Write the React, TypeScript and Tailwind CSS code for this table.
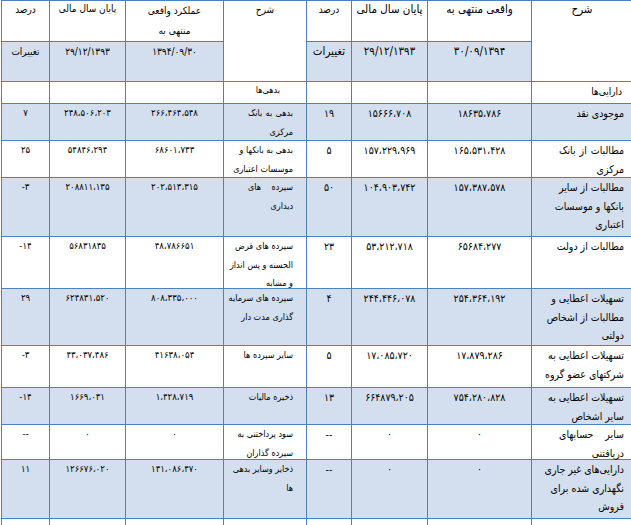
import React from "react";

type Cells = [string, string, string, string];

type Row = {
  h: number;
  band: boolean;
  right: Cells;
  left: Cells;
};

// first cell of each half: description lines split by "|"
const rows: Row[] = [
  {
    h: 37,
    band: true,
    right: ["موجودی نقد", "۱۸۶۳۵،۷۸۶", "۱۵۶۶۶،۷۰۸", "۱۹"],
    left: ["بدهی به بانک|مرکزی", "۲۶۶،۴۶۴،۵۴۸", "۲۴۸،۵۰۶،۲۰۳", "۷"],
  },
  {
    h: 37,
    band: false,
    right: ["مطالبات از بانک|مرکزی", "۱۶۵،۵۳۱،۴۲۸", "۱۵۷،۲۲۹،۹۶۹", "۵"],
    left: ["بدهی به بانکها و|موسسات اعتباری", "۶۸۶۰۱،۷۳۳", "۵۴۸۴۶،۲۹۴", "۲۵"],
  },
  {
    h: 59,
    band: true,
    right: ["مطالبات از سایر|بانکها و موسسات|اعتباری", "۱۵۷،۳۸۷،۵۷۸", "۱۰۴،۹۰۳،۷۴۲", "۵۰"],
    left: ["سپرده های|دیداری", "۲۰۲،۵۱۳،۳۱۵", "۲۰۸۸۱۱،۱۳۵", "-۳"],
  },
  {
    h: 52,
    band: false,
    right: ["مطالبات از دولت", "۶۵۶۸۴،۲۷۷", "۵۳،۲۱۲،۷۱۸", "۲۳"],
    left: ["سپرده های قرض|الحسنه و پس انداز|و مشابه", "۴۸،۷۸۶۶۵۱", "۵۶۸۳۱۸۳۵", "-۱۴"],
  },
  {
    h: 57,
    band: true,
    right: ["تسهیلات اعطایی و|مطالبات از اشخاص|دولتی", "۲۵۴،۳۶۴،۱۹۲", "۲۴۴،۴۴۶،۰۷۸", "۴"],
    left: ["سپرده های سرمایه|گذاری مدت دار", "۸۰۸،۳۳۵،۰۰۰", "۶۲۴۸۳۱،۵۲۰", "۲۹"],
  },
  {
    h: 42,
    band: false,
    right: ["تسهیلات اعطایی به|شرکتهای عضو گروه", "۱۷،۸۷۹،۲۸۶", "۱۷،۰۸۵،۷۲۰", "۵"],
    left: ["سایر سپرده ها", "۴۱۶۳۸،۰۵۴", "۴۳،۰۳۷،۴۸۶", "-۳"],
  },
  {
    h: 37,
    band: true,
    right: ["تسهیلات اعطایی به|سایر اشخاص", "۷۵۴،۲۸۰،۸۲۸", "۶۶۴۸۷۹،۲۰۵", "۱۳"],
    left: ["ذخیره مالیات", "۱،۴۲۸،۷۱۹", "۱۶۶۹،۰۳۱", "-۱۴"],
  },
  {
    h: 35,
    band: false,
    right: ["سایر حسابهای|دریافتنی", "۰", "۰", "--"],
    left: ["سود پرداختنی به|سپرده گذاران", "۰", "۰", "--"],
  },
  {
    h: 59,
    band: true,
    right: ["دارایی‌های غیر جاری|نگهداری شده برای|فروش", "۰", "۰", "--"],
    left: ["ذخایر وسایر بدهی|ها", "۱۴۱،۰۸۶،۴۷۰", "۱۲۶۶۷۶،۰۲۰", "۱۱"],
  },
];

const cell = "border border-[#4F81BD] align-top p-0";

function Desc({ text, small }: { text: string; small?: boolean }) {
  const lines = text.split("|");
  return (
    <div className="h-0 overflow-visible">
      <div
        className={`leading-[18.5px] ${
          small ? "text-[9px] w-[45px] mr-[13px]" : "text-[10.5px] w-[65px] mr-[8px]"
        }`}
      >
        {lines.map((l, i) =>
          i < lines.length - 1 ? (
            <div key={i} className="whitespace-nowrap text-justify [text-align-last:justify]">
              {l}
            </div>
          ) : (
            <div key={i} className="whitespace-nowrap text-right">
              {l}
            </div>
          )
        )}
      </div>
    </div>
  );
}

function Half({ cells, small }: { cells: Cells; small?: boolean }) {
  const size = small ? "text-[9.5px]" : "text-[10.5px]";
  return (
    <>
      <td className={cell}>
        <Desc text={cells[0]} small={small} />
      </td>
      {cells.slice(1).map((v, i) => (
        <td key={i} className={`${cell} ${size} text-center leading-[18px]`}>
          <span dir="ltr">{v}</span>
        </td>
      ))}
    </>
  );
}

export default function App() {
  const right = "text-[11.5px]";
  const left = "text-[10px]";
  const th = `${cell} font-normal text-center`;

  return (
    <div className="w-[631px] h-[525px] overflow-hidden bg-white text-black font-['DejaVu_Sans_Condensed','DejaVu_Sans',sans-serif]">
      <table dir="rtl" className="table-fixed border-collapse w-[632px] ml-px">
        <colgroup>
          <col className="w-[101px]" />
          <col className="w-[104px]" />
          <col className="w-[76px]" />
          <col className="w-[45px]" />
          <col className="w-[83px]" />
          <col className="w-[98px]" />
          <col className="w-[76px]" />
          <col className="w-[48px]" />
        </colgroup>
        <tbody>
          <tr className="h-[41px]">
            <th rowSpan={2} className={`${th} ${right}`}>شرح</th>
            <th className={`${th} ${right}`}>واقعی منتهی به</th>
            <th className={`${th} ${right}`}>پایان سال مالی</th>
            <th className={`${th} ${left} pt-px`}>درصد</th>
            <th rowSpan={2} className={`${th} ${left} pt-px`}>شرح</th>
            <th className={`${th} ${left} leading-[20px]`}>
              عملکرد واقعی
              <br />
              منتهی به
            </th>
            <th className={`${th} ${left}`}>پایان سال مالی</th>
            <th className={`${th} ${left} pt-px`}>درصد</th>
          </tr>
          <tr className="h-[40px] bg-[#D3DFEE]">
            <td className={`${th} ${right} pt-px`}><span dir="ltr">۳۰/۰۹/۱۳۹۴</span></td>
            <td className={`${th} ${right} pt-px`}><span dir="ltr">۲۹/۱۲/۱۳۹۳</span></td>
            <td className={`${th} ${right} pt-px`}>تغییرات</td>
            <td className={`${th} ${left} pt-[2px]`}><span dir="ltr">۱۳۹۴/۰۹/۳۰</span></td>
            <td className={`${th} ${left} pt-[2px]`}><span dir="ltr">۲۹/۱۲/۱۳۹۳</span></td>
            <td className={`${th} ${left} pt-[2px]`}>تغییرات</td>
          </tr>
          <tr className="h-[22px]">
            <td className={`${cell} text-[10px] pr-[10px] pt-[2px]`}>دارایی‌ها</td>
            <td className={cell} />
            <td className={cell} />
            <td className={cell} />
            <td className={`${cell} text-[9px] pr-[26px] pt-[2px]`}>بدهی‌ها</td>
            <td className={cell} />
            <td className={cell} />
            <td className={cell} />
          </tr>
          {rows.map((r, i) => (
            <tr key={i} className={r.band ? "bg-[#D3DFEE]" : ""} style={{ height: r.h }}>
              <Half cells={r.right} />
              <Half cells={r.left} small />
            </tr>
          ))}
          <tr className="h-[30px]">
            {Array.from({ length: 8 }).map((_, i) => (
              <td key={i} className={cell} />
            ))}
          </tr>
        </tbody>
      </table>
    </div>
  );
}
